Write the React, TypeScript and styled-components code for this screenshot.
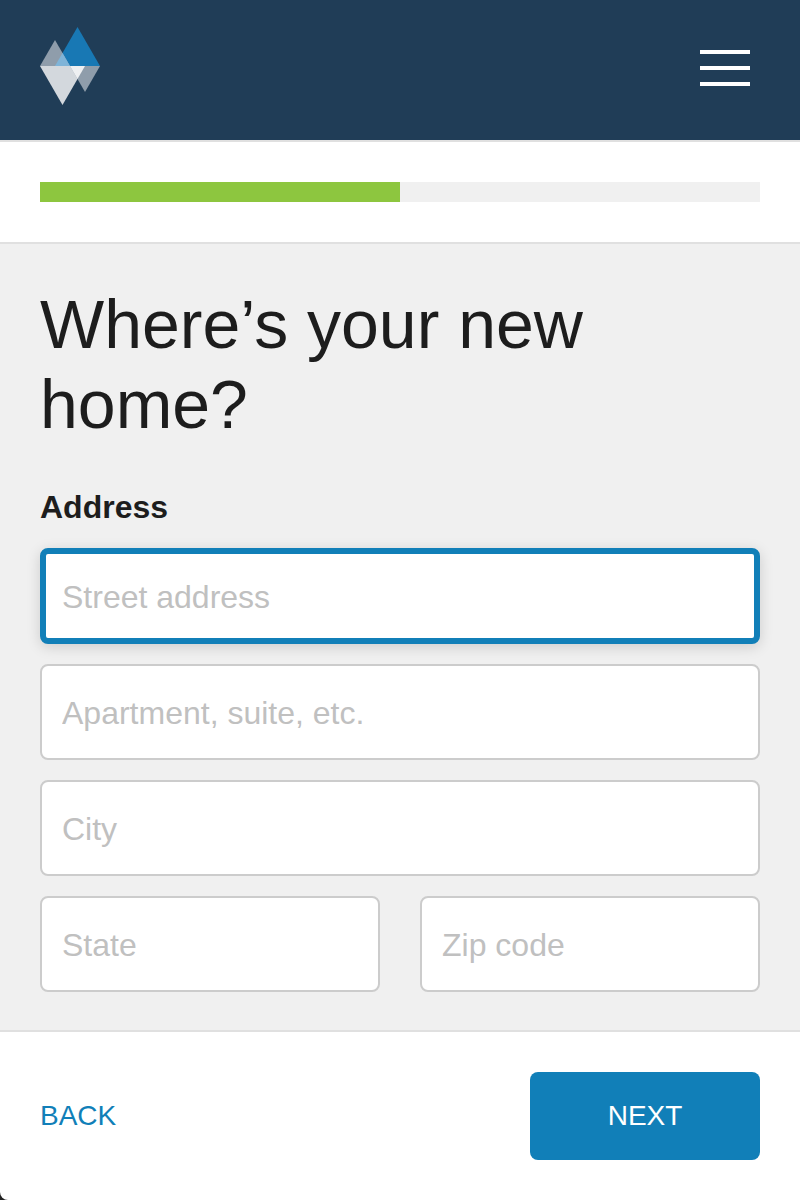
import React from 'react';
import styled, { createGlobalStyle, css } from 'styled-components';

const colors = {
  navy: '#203d57',
  blue: '#117fb8',
  green: '#8dc63f',
  ink: '#1d1d1d',
  surface: '#f0f0f0',
  line: '#e0e0e0',
  fieldLine: '#cccccc',
  placeholder: '#c0c0c0',
};

const GlobalStyle = createGlobalStyle`
  *, *::before, *::after { box-sizing: border-box; }
  html { background: #222222; }
  body {
    margin: 0;
    color: ${colors.ink};
    font-family: "Liberation Sans", Arial, Helvetica, sans-serif;
  }
`;

const Page = styled.div`
  display: flex;
  flex-direction: column;
  min-height: 100vh;
  background: #ffffff;
  border-bottom-left-radius: 8px;
  overflow: hidden;
`;

const Header = styled.header`
  display: flex;
  align-items: center;
  justify-content: space-between;
  padding: 26px 50px 34px 40px;
  background: ${colors.navy};
`;

const LogoLink = styled.a`
  display: block;
  height: 80px;
`;

const MenuButton = styled.button`
  display: flex;
  flex-direction: column;
  gap: 12px;
  margin: 4px 0 0;
  padding: 0;
  border: 0;
  background: none;
  cursor: pointer;
`;

const MenuBar = styled.span`
  width: 50px;
  height: 4px;
  background: #ffffff;
`;

const ProgressSection = styled.section`
  padding: 40px;
  border-top: 2px solid ${colors.line};
  border-bottom: 2px solid ${colors.line};
`;

const ProgressTrack = styled.div`
  height: 20px;
  background: ${colors.surface};
`;

const ProgressFill = styled.div`
  height: 100%;
  background: ${colors.green};
`;

const Form = styled.form`
  display: flex;
  flex: 1;
  flex-direction: column;
`;

const Content = styled.main`
  flex: 1;
  padding: 40px 40px 38px;
  background: ${colors.surface};
`;

const Title = styled.h1`
  margin: 0 0 40px;
  font-size: 68px;
  font-weight: 400;
  line-height: 80px;
`;

const Label = styled.label`
  display: block;
  margin-bottom: 18px;
  font-size: 32px;
  font-weight: 700;
  line-height: 46px;
`;

const Fields = styled.div`
  display: grid;
  grid-template-columns: 1fr 1fr;
  gap: 20px 40px;
`;

const activeField = css`
  padding: 2px 16px 0;
  border: 6px solid ${colors.blue};
  box-shadow: 0 3px 14px rgba(0, 0, 0, 0.15);
  outline: 0;
`;

const Field = styled.input<{ $wide?: boolean; $active?: boolean }>`
  grid-column: ${({ $wide }) => ($wide ? '1 / -1' : 'auto')};
  width: 100%;
  min-width: 0;
  height: 96px;
  padding: 2px 20px 0;
  border: 2px solid ${colors.fieldLine};
  border-radius: 8px;
  background: #ffffff;
  color: ${colors.ink};
  font-family: inherit;
  font-size: 32px;

  &::placeholder {
    color: ${colors.placeholder};
    opacity: 1;
  }

  &:focus {
    ${activeField}
  }

  ${({ $active }) => $active && activeField}
`;

const Footer = styled.footer`
  display: flex;
  align-items: center;
  justify-content: space-between;
  padding: 40px;
  border-top: 2px solid ${colors.line};
`;

const BackLink = styled.a`
  color: ${colors.blue};
  font-size: 28px;
  line-height: 32px;
  text-decoration: none;
`;

const NextButton = styled.button`
  min-width: 230px;
  height: 88px;
  padding: 0 40px;
  border: 0;
  border-radius: 8px;
  background: ${colors.blue};
  color: #ffffff;
  font-family: inherit;
  font-size: 28px;
  cursor: pointer;
`;

const Logo = () => (
  <svg width="60" height="80" viewBox="0 0 60 80" aria-hidden="true">
    <path d="M37.5 1 60 40H15Z" fill="#1878b4" />
    <path d="M15 14 30 40H0Z" fill="#8f9dab" />
    <path d="M22.5 27 30 40H15Z" fill="#7fb4d8" />
    <path d="M0 40H45L22.5 79Z" fill="#d3d8dd" />
    <path d="M30 40H60L45 66Z" fill="#8f9dab" />
    <path d="M30 40H45L37.5 53Z" fill="#eef0f2" />
  </svg>
);

export default function App() {
  return (
    <>
      <GlobalStyle />
      <Page>
        <Header>
          <LogoLink href="#" aria-label="Home">
            <Logo />
          </LogoLink>
          <MenuButton type="button" aria-label="Menu">
            <MenuBar />
            <MenuBar />
            <MenuBar />
          </MenuButton>
        </Header>

        <ProgressSection>
          <ProgressTrack
            role="progressbar"
            aria-label="Progress"
            aria-valuenow={50}
            aria-valuemin={0}
            aria-valuemax={100}
          >
            <ProgressFill style={{ width: '50%' }} />
          </ProgressTrack>
        </ProgressSection>

        <Form onSubmit={(event) => event.preventDefault()}>
          <Content>
            <Title>Where’s your new home?</Title>
            <Label htmlFor="street">Address</Label>
            <Fields>
              <Field id="street" type="text" placeholder="Street address" $wide $active />
              <Field type="text" placeholder="Apartment, suite, etc." aria-label="Apartment, suite, etc." $wide />
              <Field type="text" placeholder="City" aria-label="City" $wide />
              <Field type="text" placeholder="State" aria-label="State" />
              <Field type="text" placeholder="Zip code" aria-label="Zip code" />
            </Fields>
          </Content>
          <Footer>
            <BackLink href="#">BACK</BackLink>
            <NextButton type="submit">NEXT</NextButton>
          </Footer>
        </Form>
      </Page>
    </>
  );
}
